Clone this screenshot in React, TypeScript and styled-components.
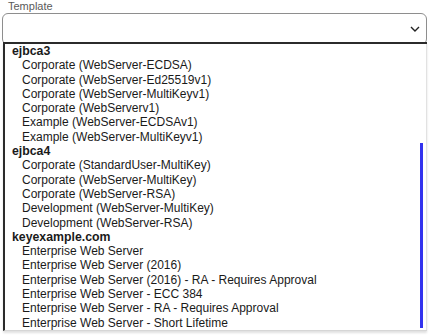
import React from 'react';
import styled, { createGlobalStyle } from 'styled-components';

const GlobalStyle = createGlobalStyle`
  html, body {
    margin: 0;
    padding: 0;
    background: #fff;
    font-family: "Liberation Sans", Arial, sans-serif;
  }
`;

const Field = styled.div`
  position: relative;
  width: 430px;
  height: 335px;
  padding: 0 3px;
  box-sizing: border-box;
  overflow: hidden;
`;

const Label = styled.div`
  font-size: 11px;
  color: #5a5a5a;
  line-height: 13px;
  padding-left: 5px;
`;

const SelectBox = styled.div`
  height: 30px;
  margin-left: -1px;
  border: 1px solid #8e8e8e;
  border-radius: 6px;
  display: flex;
  align-items: center;
  justify-content: flex-end;
  padding-right: 6px;
  background: #fff;
`;

const Listbox = styled.div`
  position: absolute;
  left: 3px;
  top: 42px;
  width: 424px;
  height: 289px;
  background: #fff;
  border-top: 2px solid #2b2b2b;
  border-left: 2px solid #2b2b2b;
  border-bottom: 1px solid #d6d6d6;
  box-shadow: 0 2px 2px rgba(0, 0, 0, 0.12);
  box-sizing: border-box;
  display: flex;
`;

const Options = styled.div`
  flex: 1;
  overflow: hidden;
  font-size: 12px;
  line-height: 14.3px;
  color: #1a1a1a;
  white-space: nowrap;
`;

const Row = styled.div<{ $group?: boolean }>`
  padding-left: ${(p) => (p.$group ? '7px' : '17px')};
  font-weight: ${(p) => (p.$group ? 700 : 400)};
  font-size: ${(p) => (p.$group ? '12.3px' : '12px')};
`;

const Track = styled.div`
  width: 6px;
  position: relative;
  border-left: 1px solid #fff;
  border-right: 1px solid #e2e2e2;
`;

const Thumb = styled.div`
  position: absolute;
  left: 0;
  width: 3px;
  top: 99px;
  bottom: 2px;
  background: #3333ee;
`;

const groups: { name: string; items: string[] }[] = [
  {
    name: 'ejbca3',
    items: [
      'Corporate (WebServer-ECDSA)',
      'Corporate (WebServer-Ed25519v1)',
      'Corporate (WebServer-MultiKeyv1)',
      'Corporate (WebServerv1)',
      'Example (WebServer-ECDSAv1)',
      'Example (WebServer-MultiKeyv1)',
    ],
  },
  {
    name: 'ejbca4',
    items: [
      'Corporate (StandardUser-MultiKey)',
      'Corporate (WebServer-MultiKey)',
      'Corporate (WebServer-RSA)',
      'Development (WebServer-MultiKey)',
      'Development (WebServer-RSA)',
    ],
  },
  {
    name: 'keyexample.com',
    items: [
      'Enterprise Web Server',
      'Enterprise Web Server (2016)',
      'Enterprise Web Server (2016) - RA - Requires Approval',
      'Enterprise Web Server - ECC 384',
      'Enterprise Web Server - RA - Requires Approval',
      'Enterprise Web Server - Short Lifetime',
    ],
  },
];

const Chevron = () => (
  <svg width="10" height="6" viewBox="0 0 10 6">
    <path d="M1 1 L5 5 L9 1" fill="none" stroke="#222" strokeWidth="1.4" />
  </svg>
);

export default function App() {
  return (
    <>
      <GlobalStyle />
      <Field>
        <Label>Template</Label>
        <SelectBox>
          <Chevron />
        </SelectBox>
        <Listbox>
          <Options>
            {groups.map((g) => (
              <React.Fragment key={g.name}>
                <Row $group>{g.name}</Row>
                {g.items.map((item) => (
                  <Row key={item}>{item}</Row>
                ))}
              </React.Fragment>
            ))}
          </Options>
          <Track>
            <Thumb />
          </Track>
        </Listbox>
      </Field>
    </>
  );
}
